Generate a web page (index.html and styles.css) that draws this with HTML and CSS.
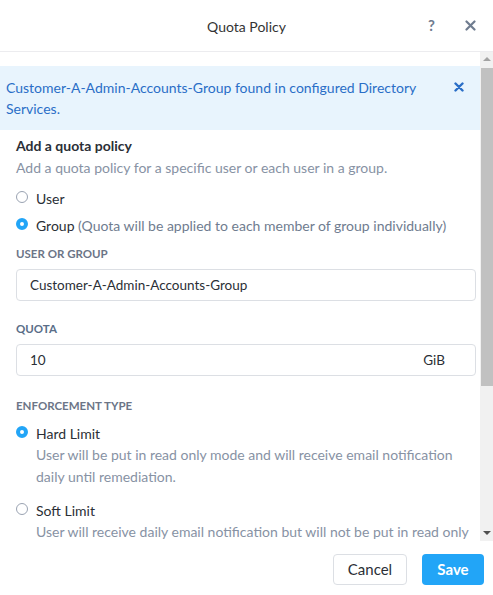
FILE: index.html
```html
<!DOCTYPE html>
<html>
<head>
<meta charset="utf-8">
<link rel="stylesheet" href="styles.css">
</head>
<body>
<div class="modal">
  <div class="header">
    <div class="title">Quota Policy</div>
    <div class="hicons">
      <span class="help">?</span>
      <svg class="hclose" width="11" height="11" viewBox="0 0 11 11"><path d="M1.5 1.5L9.5 9.5M9.5 1.5L1.5 9.5" stroke="#6f7c8f" stroke-width="2.2" stroke-linecap="round"/></svg>
    </div>
  </div>
  <div class="body">
    <div class="content">
      <div class="alert">
        <div class="alert-text">Customer-A-Admin-Accounts-Group found in configured Directory Services.</div>
        <svg class="aclose" width="10" height="10" viewBox="0 0 10 10"><path d="M1.5 1.5L8.5 8.5M8.5 1.5L1.5 8.5" stroke="#2a6ec7" stroke-width="2.4" stroke-linecap="round"/></svg>
      </div>
      <div class="section">
        <div class="h">Add a quota policy</div>
        <div class="desc">Add a quota policy for a specific user or each user in a group.</div>
        <div class="radios">
          <div class="radio"><span class="dot"></span><span class="rlabel">User</span></div>
          <div class="radio"><span class="dot on"></span><span class="rlabel">Group <span class="muted">(Quota will be applied to each member of group individually)</span></span></div>
        </div>
        <div class="label">USER OR GROUP</div>
        <div class="input">Customer-A-Admin-Accounts-Group</div>
        <div class="label blue">QUOTA</div>
        <div class="input split"><span>10</span><span class="unit">GiB</span></div>
        <div class="label enf">ENFORCEMENT TYPE</div>
        <div class="opt">
          <div class="radio"><span class="dot on"></span><span class="rlabel">Hard Limit</span></div>
          <div class="odesc">User will be put in read only mode and will receive email notification daily until remediation.</div>
        </div>
        <div class="opt second">
          <div class="radio"><span class="dot"></span><span class="rlabel">Soft Limit</span></div>
          <div class="odesc">User will receive daily email notification but will not be put in read only mode.</div>
        </div>
      </div>
    </div>
    <div class="scrollbar">
      <div class="arrow up"></div>
      <div class="thumb"></div>
      <div class="track"></div>
      <div class="arrow down"></div>
    </div>
  </div>
  <div class="footer">
    <button class="btn cancel">Cancel</button>
    <button class="btn save">Save</button>
  </div>
</div>
</body>
</html>
```
FILE: styles.css
```css
* { box-sizing: border-box; }
html, body { margin: 0; padding: 0; background: #fff; }
body { font-family: Lato, "Liberation Sans", sans-serif; color: #2b2f36; font-size: 14px; }
.modal { width: 493px; height: 595px; display: flex; flex-direction: column; overflow: hidden; }
.header { height: 52px; flex: none; border-bottom: 1px solid #ececef; display: flex; align-items: center; justify-content: center; position: relative; }
.title { font-size: 14px; color: #333; padding-top: 1px; }
.hicons { position: absolute; right: 17px; top: 18px; display: flex; align-items: center; gap: 30px; }
.help { font-weight: 700; color: #6f7c8f; font-size: 15px; line-height: 14px; }
.body { flex: 1; display: flex; min-height: 0; }
.content { flex: 1; overflow: hidden; padding-top: 14px; }
.alert { background: #e8f4fd; padding: 11px 16px 11px 6px; display: flex; justify-content: space-between; align-items: flex-start; }
.alert-text { color: #2a6ec7; line-height: 21px; max-width: 425px; }
.aclose { margin-top: 5px; }
.section { padding: 6px 4px 0 16px; }
.h { font-weight: 700; color: #2b2f36; line-height: 20px; }
.desc { color: #8792a4; line-height: 20px; margin-top: 2px; }
.radios { margin-top: 10px; display: flex; flex-direction: column; gap: 7px; }
.radio { display: flex; align-items: center; height: 20px; }
.dot { width: 12px; height: 12px; border-radius: 50%; border: 1px solid #9aa3b2; margin-right: 8px; margin-top: -2px; flex: none; }
.dot.on { border: 4px solid #22a5f7; background: #fff; }
.rlabel { color: #2b2f36; }
.muted { color: #6f7c8f; }
.label { font-size: 11.5px; font-weight: 700; color: #6c7587; margin-top: 11px; line-height: 16px; }
.label.blue { color: #5a6e88; margin-top: 20px; }
.label.enf { margin-top: 22px; }
.input { margin-top: 7px; height: 32px; border: 1px solid #dcdfe4; border-radius: 4px; padding: 0 13px; display: flex; align-items: center; color: #2b2f36; font-size: 13.5px; }
.split { justify-content: space-between; padding-right: 30px; }
.opt { margin-top: 9px; }
.opt.second { margin-top: 12px; }
.odesc { color: #8792a4; line-height: 22px; padding-left: 20px; margin-top: 1px; }
.scrollbar { width: 13px; flex: none; background: #f1f1f1; display: flex; flex-direction: column; }
.arrow { height: 14px; flex: none; position: relative; }
.arrow.up::after { content: ""; position: absolute; left: 3px; top: 5px; border-left: 4px solid transparent; border-right: 4px solid transparent; border-bottom: 4px solid #a3a3a3; }
.arrow.down::after { content: ""; position: absolute; left: 3px; top: 4px; border-left: 4px solid transparent; border-right: 4px solid transparent; border-top: 4px solid #505050; }
.thumb { height: 318px; background: #c1c1c1; margin: 2px 0 0 1px; flex: none; }
.track { flex: 1; }
.footer { height: 54px; flex: none; display: flex; justify-content: flex-end; align-items: center; gap: 15px; padding: 2px 9px 0 0; }
.btn { font-family: Lato, "Liberation Sans", sans-serif; font-size: 15px; height: 31px; border-radius: 4px; cursor: pointer; }
.cancel { background: #fff; border: 1px solid #dcdfe4; color: #2b2f36; width: 74px; }
.save { background: #22a5f7; border: none; color: #fff; font-weight: 700; width: 62px; }
```
